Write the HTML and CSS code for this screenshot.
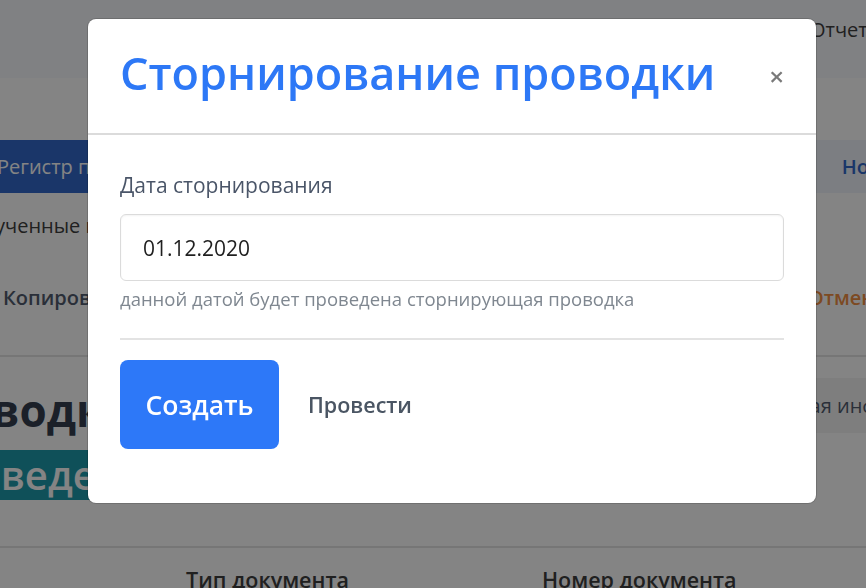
FILE: index.html
```html
<!DOCTYPE html>
<html lang="ru">

<head>
    <meta charset="UTF-8">
    <meta name="viewport" content="width=device-width, initial-scale=1.0">
    <title>Сторнирование проводки</title>
    <link rel="stylesheet" href="styles.css">
</head>

<body>

    <!-- страница под модальным окном -->
    <nav class="navbar">
        <span class="navbar-item">Отчет</span>
    </nav>

    <section class="page">
        <div class="tabs-row">
            <span class="tab is-active">Регистр проводок</span>
            <span class="tab is-new">Новая</span>
        </div>
        <p class="subtitle">Полученные проводки</p>
        <div class="actions-row">
            <span class="action">Копировать</span>
            <span class="action is-warning">Отменить</span>
        </div>
        <div class="title-row">
            <div class="title-col">
                <h1 class="page-title">Проводка</h1>
                <span class="tag-status">Проведена</span>
            </div>
            <span class="info-box">Дополнительная информация</span>
        </div>
        <div class="table-head">
            <span>Тип документа</span>
            <span>Номер документа</span>
        </div>
    </section>

    <!-- модальное окно -->
    <div class="modal">
        <div class="modal-background"></div>
        <div class="modal-card">
            <header class="modal-card-head">
                <p class="modal-card-title">Сторнирование проводки</p>
                <button class="delete" aria-label="close">&times;</button>
            </header>
            <section class="modal-card-body">
                <label class="label">Дата сторнирования</label>
                <input class="input" type="text" value="01.12.2020">
                <p class="help">данной датой будет проведена сторнирующая проводка</p>
                <hr>
                <div class="buttons">
                    <button class="button is-primary">Создать</button>
                    <button class="button is-text">Провести</button>
                </div>
            </section>
        </div>
    </div>

</body>

</html>
```

FILE: styles.css
```css
body {
    margin: 0;
    font-family: "Open Sans", "Noto Sans", sans-serif;
    background: #fff;
    color: #363636;
    overflow: hidden;
    height: 588px;
}

/* фон */
.navbar {
    height: 78px;
    background: #f7f9fd;
    padding-left: 810px;
    box-sizing: border-box;
    line-height: 60px;
    font-size: 20px;
    white-space: nowrap;
    overflow: hidden;
}

.page {
    padding-top: 62px;
}

.tabs-row {
    display: flex;
    justify-content: space-between;
    height: 53px;
    font-size: 20px;
    white-space: nowrap;
}

.tab {
    line-height: 53px;
}

.tab.is-active {
    background: #2a63c8;
    color: #fff;
    padding-right: 30px;
    margin-left: -3px;
}

.tab.is-new {
    background: #eef3fb;
    color: #2a63c8;
    font-weight: 600;
    padding: 0 20px 0 26px;
    margin-right: -58px;
}

.subtitle {
    margin: 0 0 0 -43px;
    font-size: 20px;
    line-height: 66px;
    height: 66px;
    white-space: nowrap;
}

.actions-row {
    display: flex;
    justify-content: space-between;
    height: 98px;
    padding-top: 24px;
    box-sizing: border-box;
    line-height: 30px;
    font-size: 20px;
    font-weight: 600;
    border-bottom: 2px solid #e2e2e2;
    white-space: nowrap;
}

.action {
    margin-left: 3px;
    color: #4a5568;
}

.action.is-warning {
    color: #f08a3a;
    margin-right: -44px;
}

.title-row {
    display: flex;
    justify-content: space-between;
    height: 191px;
    padding-top: 27px;
    box-sizing: border-box;
    border-bottom: 2px solid #e2e2e2;
    white-space: nowrap;
}

.page-title {
    margin: 0 0 0 -96px;
    font-size: 44px;
    font-weight: 700;
    line-height: 52px;
    color: #2d3748;
}

.tag-status {
    display: inline-block;
    margin-top: 14px;
    margin-left: -98px;
    padding: 0 20px;
    background: #1596a8;
    color: #fff;
    font-size: 40px;
    font-weight: 600;
    line-height: 50px;
}

.info-box {
    align-self: flex-start;
    margin-top: -6px;
    margin-right: -117px;
    padding: 0 20px;
    background: #f3f3f3;
    color: #4a5568;
    font-size: 20px;
    line-height: 55px;
}

.table-head {
    display: flex;
    gap: 193px;
    padding: 19px 0 0 186px;
    font-size: 21.5px;
    font-weight: 600;
    line-height: 26px;
    white-space: nowrap;
}

/* модальное окно */
.modal {
    position: fixed;
    inset: 0;
}

.modal-background {
    position: absolute;
    inset: 0;
    background: rgba(10, 10, 10, 0.5);
}

.modal-card {
    position: absolute;
    left: 88px;
    top: 19px;
    width: 728px;
    height: 484px;
    background: #fff;
    border-radius: 8px;
    box-shadow: 0 0 0 1px rgba(0, 0, 0, 0.15);
    overflow: hidden;
}

.modal-card-head {
    display: flex;
    align-items: center;
    justify-content: space-between;
    height: 116px;
    padding: 0 32px 8px;
    border-bottom: 2px solid #dbdbdb;
    box-sizing: border-box;
}

.modal-card-title {
    margin: 0;
    font-size: 45px;
    font-weight: 600;
    color: #2d78f6;
}

.delete {
    border: none;
    background: none;
    padding: 0;
    font-family: inherit;
    font-size: 26px;
    font-weight: 600;
    line-height: 1;
    color: #7a7a7a;
    margin-top: 8px;
}

.modal-card-body {
    padding: 38px 32px 0;
}

.label {
    display: block;
    font-size: 21px;
    color: #4a5568;
    line-height: 24px;
}

.input {
    display: block;
    width: 100%;
    box-sizing: border-box;
    margin-top: 17px;
    height: 67px;
    border: 1px solid #dbdbdb;
    border-radius: 6px;
    padding: 0 22px;
    font-family: inherit;
    font-size: 21px;
    color: #1f1f1f;
    box-shadow: inset 0 1px 2px rgba(10, 10, 10, 0.05);
}

.help {
    margin: 6px 0 0;
    font-size: 18.5px;
    color: #7f8790;
    line-height: 24px;
}

hr {
    border: none;
    border-top: 2px solid #e3e3e3;
    margin: 27px 0 20px;
}

.buttons {
    display: flex;
    align-items: center;
    gap: 29px;
}

.button {
    font-family: inherit;
    border: none;
    cursor: pointer;
}

.button.is-primary {
    width: 159px;
    height: 89px;
    border-radius: 8px;
    background: #2d78f8;
    color: #fff;
    font-size: 26.5px;
    font-weight: 600;
}

.button.is-text {
    background: none;
    padding: 0;
    font-size: 21.5px;
    font-weight: 600;
    color: #4a5563;
}
```
